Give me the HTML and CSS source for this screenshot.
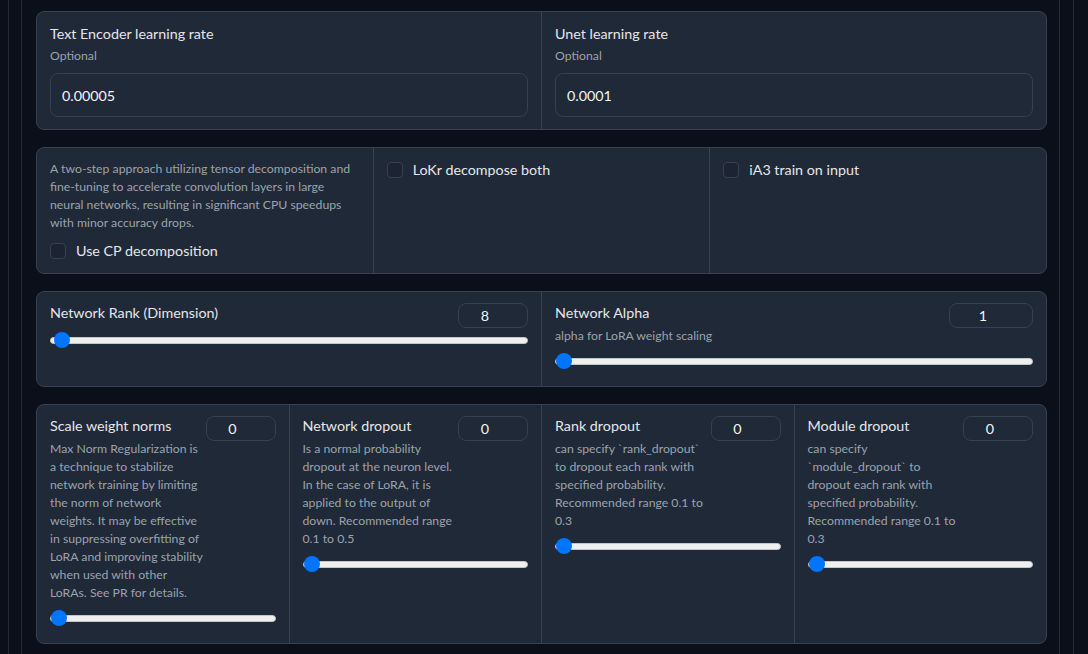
FILE: index.html
```html
<!DOCTYPE html>
<html lang="en">
<head>
<meta charset="utf-8">
<title>LoRA network settings</title>
<link rel="stylesheet" href="styles.css">
</head>
<body>
<div class="frame">
  <div class="panel">

    <section class="card cols-2 roomy">
      <div class="cell">
        <label class="label">Text Encoder learning rate</label>
        <div class="info">Optional</div>
        <input class="text-input" type="text" value="0.00005">
      </div>
      <div class="cell">
        <label class="label">Unet learning rate</label>
        <div class="info">Optional</div>
        <input class="text-input" type="text" value="0.0001">
      </div>
    </section>

    <section class="card cols-3 roomy">
      <div class="cell">
        <p class="info desc">A two-step approach utilizing tensor decomposition and<br>fine-tuning to accelerate convolution layers in large<br>neural networks, resulting in significant CPU speedups<br>with minor accuracy drops.</p>
        <label class="check spaced"><input type="checkbox"><span>Use CP decomposition</span></label>
      </div>
      <div class="cell">
        <label class="check"><input type="checkbox"><span>LoKr decompose both</span></label>
      </div>
      <div class="cell">
        <label class="check"><input type="checkbox"><span>iA3 train on input</span></label>
      </div>
    </section>

    <section class="card cols-2">
      <div class="cell">
        <div class="slider-head">
          <div class="slider-text"><span class="label">Network Rank (Dimension)</span></div>
          <input class="num" type="number" value="8">
        </div>
        <input class="range" type="range" min="1" max="1024" value="8">
      </div>
      <div class="cell">
        <div class="slider-head">
          <div class="slider-text">
            <span class="label">Network Alpha</span>
            <div class="info">alpha for LoRA weight scaling</div>
          </div>
          <input class="num wide" type="number" value="1">
        </div>
        <input class="range" type="range" min="0.1" max="1024" step="0.1" value="0.1">
      </div>
    </section>

    <section class="card cols-4">
      <div class="cell">
        <div class="slider-head">
          <div class="slider-text">
            <span class="label">Scale weight norms</span>
            <div class="info">Max Norm Regularization is<br>a technique to stabilize<br>network training by limiting<br>the norm of network<br>weights. It may be effective<br>in suppressing overfitting of<br>LoRA and improving stability<br>when used with other<br>LoRAs. See PR for details.</div>
          </div>
          <input class="num" type="number" value="0">
        </div>
        <input class="range" type="range" min="0" max="10" step="0.01" value="0">
      </div>
      <div class="cell">
        <div class="slider-head">
          <div class="slider-text">
            <span class="label">Network dropout</span>
            <div class="info">Is a normal probability<br>dropout at the neuron level.<br>In the case of LoRA, it is<br>applied to the output of<br>down. Recommended range<br>0.1 to 0.5</div>
          </div>
          <input class="num" type="number" value="0">
        </div>
        <input class="range" type="range" min="0" max="1" step="0.01" value="0">
      </div>
      <div class="cell">
        <div class="slider-head">
          <div class="slider-text">
            <span class="label">Rank dropout</span>
            <div class="info">can specify `rank_dropout`<br>to dropout each rank with<br>specified probability.<br>Recommended range 0.1 to<br>0.3</div>
          </div>
          <input class="num" type="number" value="0">
        </div>
        <input class="range" type="range" min="0" max="1" step="0.01" value="0">
      </div>
      <div class="cell">
        <div class="slider-head">
          <div class="slider-text">
            <span class="label">Module dropout</span>
            <div class="info">can specify<br>`module_dropout` to<br>dropout each rank with<br>specified probability.<br>Recommended range 0.1 to<br>0.3</div>
          </div>
          <input class="num" type="number" value="0">
        </div>
        <input class="range" type="range" min="0" max="1" step="0.01" value="0">
      </div>
    </section>

  </div>
</div>
</body>
</html>
```

FILE: styles.css
```css
* {
  box-sizing: border-box;
}

html, body {
  margin: 0;
  padding: 0;
  background: #0b0f19;
  height: 100%;
  overflow: hidden;
}

body {
  font-family: "Lato", "Noto Sans", sans-serif;
  color: #e5e7eb;
  font-size: 14px;
}

.frame {
  margin-left: 8px;
  width: 1066px;
  min-height: 100vh;
  border-left: 1px solid #242b38;
  border-right: 1px solid #242b38;
  padding: 0 13px 0 12px;
}

.panel {
  min-height: 100vh;
  border-left: 1px solid #242b38;
  border-right: 1px solid #242b38;
  padding: 11px 12px 0 14px;
  display: flex;
  flex-direction: column;
  gap: 17px;
}

.card {
  display: grid;
  gap: 1px;
  background: #374151;
  border: 1px solid #374151;
  border-radius: 8px;
  overflow: hidden;
}

.cols-2 { grid-template-columns: 1fr 1fr; }
.cols-3 { grid-template-columns: 1fr 1fr 1fr; }
.cols-4 { grid-template-columns: 1fr 1fr 1fr 1fr; }

.cell {
  background: #1f2937;
  padding: 11px 13px 11px;
  display: flex;
  flex-direction: column;
  min-width: 0;
}

.roomy .cell {
  padding-top: 12px;
  padding-bottom: 12px;
}

.label {
  display: block;
  font-size: 14.3px;
  line-height: 20px;
  color: #e5e7eb;
}

.info {
  margin-top: 3px;
  font-size: 12.25px;
  line-height: 18px;
  color: #9ca3af;
  white-space: nowrap;
}

.desc {
  margin: 0;
}

.text-input {
  margin-top: 8px;
  height: 44px;
  width: 100%;
  border: 1px solid #374151;
  border-radius: 8px;
  background: #1f2937;
  color: #f3f4f6;
  font-family: inherit;
  font-size: 14.3px;
  padding: 0 11px;
  outline: none;
}

.check {
  display: flex;
  align-items: center;
  gap: 10px;
  font-size: 14.3px;
  line-height: 20px;
  color: #e5e7eb;
}

.check.spaced {
  margin-top: 9px;
}

.check input {
  -webkit-appearance: none;
  appearance: none;
  margin: 0;
  width: 16px;
  height: 16px;
  flex: none;
  border: 1px solid #374151;
  border-radius: 4px;
  background: #1c2431;
}

.slider-head {
  display: flex;
  justify-content: space-between;
  align-items: flex-start;
}

.slider-text {
  flex: 1 1 auto;
  min-width: 0;
}

.slider-text .info {
  margin-top: 4px;
  margin-bottom: 4px;
}

.num {
  flex: none;
  width: 70px;
  height: 25px;
  border: 1px solid #374151;
  border-radius: 8px;
  background: #1f2937;
  color: #f3f4f6;
  font-family: inherit;
  font-size: 14.3px;
  text-align: center;
  padding: 0 16px 0 0;
  outline: none;
  -moz-appearance: textfield;
}

.num.wide {
  width: 84px;
}

.num::-webkit-outer-spin-button,
.num::-webkit-inner-spin-button {
  -webkit-appearance: none;
  margin: 0;
}

.range {
  -webkit-appearance: none;
  appearance: none;
  display: block;
  width: 100%;
  height: 16px;
  margin: 4px 0 6px;
  background: transparent;
  padding: 0;
}

.range::-webkit-slider-runnable-track {
  height: 7px;
  border-radius: 4px;
  background: #efefef;
  border: 1px solid #c6c6c6;
}

.range::-webkit-slider-thumb {
  -webkit-appearance: none;
  appearance: none;
  width: 16px;
  height: 16px;
  border-radius: 50%;
  background: #0075ff;
  border: none;
  margin-top: -5.5px;
}
```
